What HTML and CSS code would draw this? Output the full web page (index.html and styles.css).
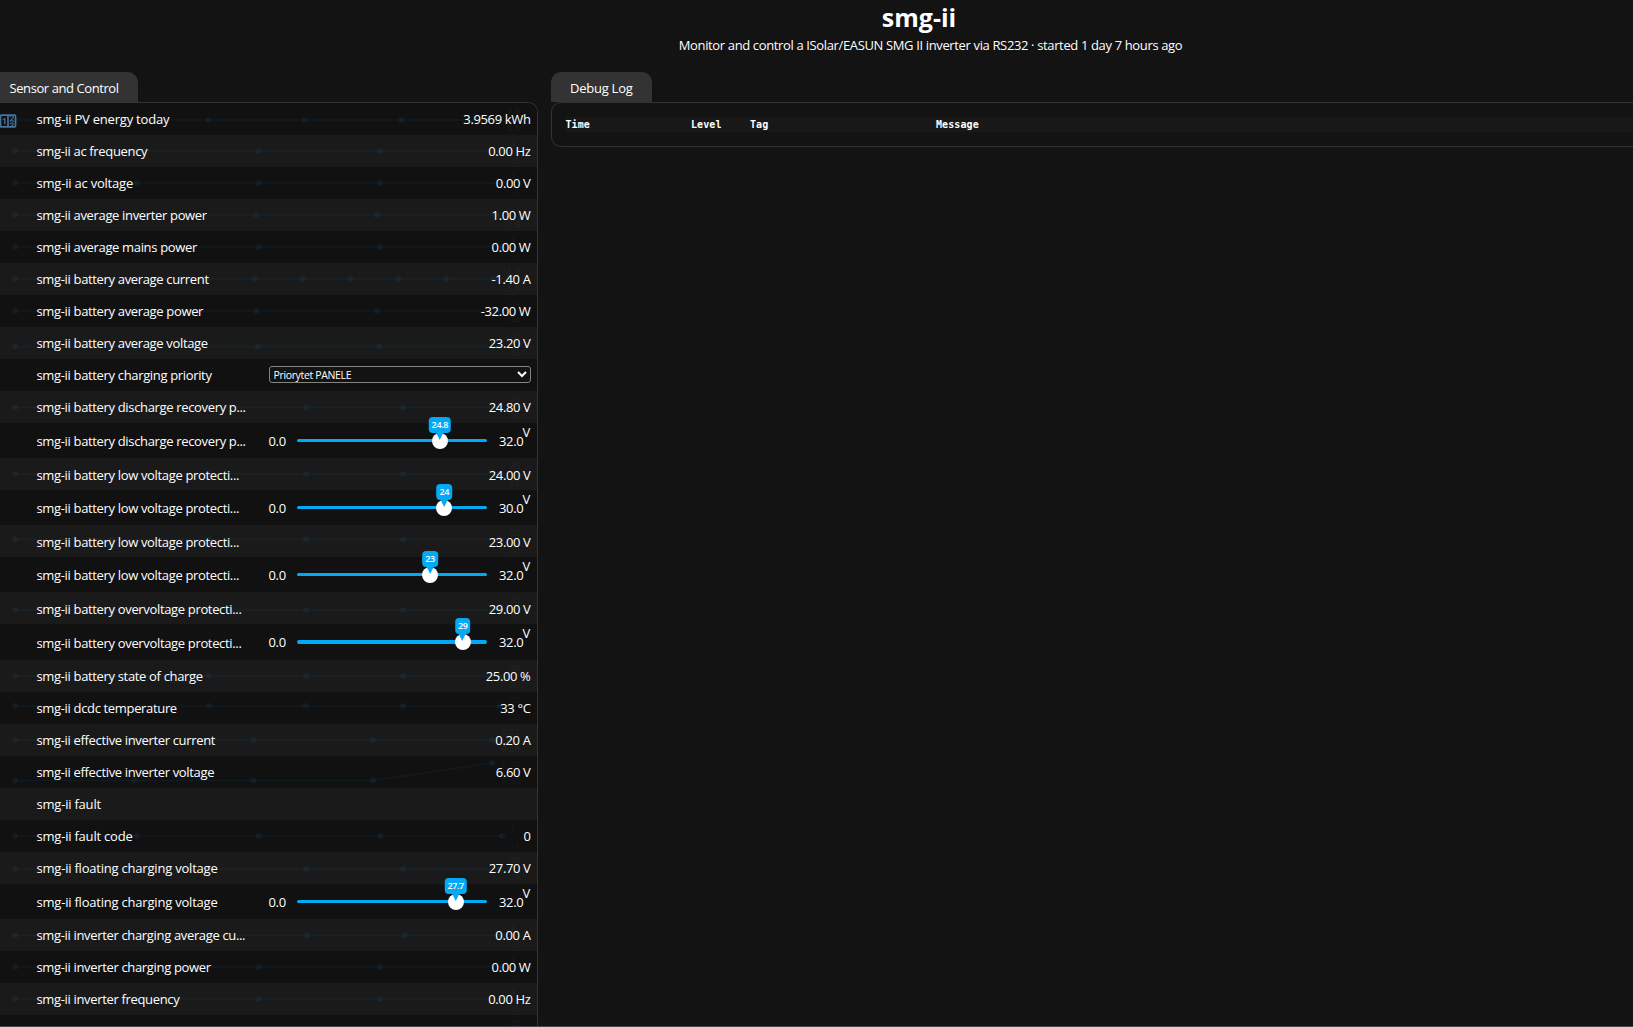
FILE: index.html
```
<!DOCTYPE html>
<html lang="en">
<head>
    <meta charset="UTF-8">
    <title>smg-ii</title>
    <link rel="stylesheet" href="styles.css">
</head>
<body>
    <header>
        <h1>smg-ii</h1>
        <p class="subtitle">Monitor and control a ISolar/EASUN SMG II inverter via RS232 · started 1 day 7 hours ago</p>
    </header>

    <main>
        <section class="entities">
            <h2 class="tab">Sensor and Control</h2>
            <div class="panel" id="entity-table"></div>
        </section>

        <section class="log">
            <h2 class="tab">Debug Log</h2>
            <div class="panel">
                <div class="log-head">
                    <span>Time</span>
                    <span>Level</span>
                    <span>Tag</span>
                    <span>Message</span>
                </div>
            </div>
        </section>
    </main>

    <script src="app.js"></script>
</body>
</html>
```
FILE: styles.css
```
* {
    box-sizing: border-box;
}
body {
    margin: 0;
    height: 1027px;
    overflow: hidden;
    background: #131313;
    color: #fff;
    border-bottom: 1px solid #4a4a4a;
    font-family: "Open Sans", "Noto Sans", sans-serif;
    font-size: 13px;
    letter-spacing: -0.36px;
}
header {
    height: 72px;
    padding-left: 205px;
    text-align: center;
}
h1 {
    margin: 0;
    font-size: 25px;
    line-height: 34px;
    letter-spacing: 0;
}
.subtitle {
    margin: 0;
    padding-left: 23px;
    line-height: 23px;
}
main {
    display: flex;
    gap: 13px;
}
.entities {
    flex: 0 0 538px;
}
.log {
    flex: 0 0 1120px;
}
.tab {
    width: 138px;
    height: 30px;
    margin: 0;
    padding-left: 9.5px;
    font-size: 13px;
    font-weight: normal;
    line-height: 33px;
    letter-spacing: -0.42px;
    background: #333;
    border-radius: 0 10px 0 0;
}
.log .tab {
    width: 101px;
    padding-left: 19px;
    letter-spacing: -0.25px;
    border-radius: 10px 10px 0 0;
}
.panel {
    border: 1px solid #333;
}
.entities .panel {
    height: 930px;
    overflow: hidden;
    border-left: 0;
    border-radius: 0 10px 0 0;
}
.log .panel {
    height: 45px;
    padding: 14px 14px 14px 13.5px;
    border-radius: 10px;
}
.log-head {
    display: grid;
    grid-template-columns: 125.5px 59px 186px 1fr;
    height: 15px;
    background: #181818;
    font: bold 10px/15px "DejaVu Sans Mono", monospace;
    letter-spacing: 0.1px;
}
.row {
    position: relative;
    display: grid;
    grid-template-columns: 232px 262px;
    align-items: center;
    height: 32px;
    padding-left: 36.5px;
    background: #111;
}
.row:nth-child(even) {
    background: #1a1a1a;
}
.row.number {
    height: 35px;
}
.row.number.tall {
    height: 36px;
}
.row.low {
    padding-top: 2px;
}
.name,
.value {
    position: relative;
    white-space: nowrap;
}
.name {
    letter-spacing: -0.34px;
}
.loose .name {
    letter-spacing: -0.21px;
}
.number:not(.tall) .name {
    padding-bottom: 2px;
}
.value {
    text-align: right;
}
.chart {
    position: absolute;
    left: 0;
    top: 0;
    width: 537px;
    height: 32px;
}
.chart path {
    fill: none;
    stroke: rgba(20, 110, 160, 0.12);
    stroke-width: 1.5;
}
.chart circle {
    fill: rgba(30, 110, 160, 0.13);
}
.chart text {
    fill: rgba(255, 255, 255, 0.055);
    font: 9.5px "Liberation Sans", sans-serif;
    letter-spacing: 0;
    text-anchor: end;
}
.icon {
    position: absolute;
    left: -2px;
    top: 7.5px;
    width: 20px;
    height: 20px;
    fill: #44739e;
}
select {
    width: 262px;
    height: 17px;
    margin-bottom: 2px;
    padding: 0;
    background: #131313;
    color: #fff;
    border: 1px solid #858585;
    border-radius: 3px;
    font: 10.5px "Open Sans", sans-serif;
    letter-spacing: -0.35px;
}
.control {
    display: grid;
    grid-template-columns: 28px 190px 12.5px 23.5px 8px;
    height: 100%;
    line-height: 37px;
}
.unit {
    line-height: 19px;
}
.track {
    position: relative;
    align-self: start;
    height: 3px;
    margin-top: 16px;
    border-radius: 2px;
    background: #03a9f4;
}
.tall .track {
    height: 4px;
}
.max {
    grid-column: 4;
}
.thumb {
    position: absolute;
    top: -6px;
    width: 16px;
    height: 16px;
    margin-left: -8px;
    border-radius: 50%;
    background: #fff;
}
.bubble {
    position: absolute;
    left: 50%;
    bottom: 16px;
    transform: translateX(-50%);
    padding: 0 3px;
    border-radius: 4px;
    background: #03a9f4;
    color: #fff;
    font-size: 9px;
    font-weight: 600;
    line-height: 16px;
}
.bubble::after {
    content: "";
    position: absolute;
    left: 50%;
    top: 15px;
    margin-left: -4px;
    border: 4px solid transparent;
    border-top: 8px solid #03a9f4;
    border-bottom: 0;
}
```
FILE: app.js
```
// chart: [step between points, y of the line, upper label, lower label]
const entities = [
    { name: 'PV energy today', value: '3.9569 kWh', chart: [96.6, 17, '4,5', '3,5'], icon: true, cls: 'loose' },
    { name: 'ac frequency', value: '0.00 Hz', chart: [121.8, 16, '1', '-1'] },
    { name: 'ac voltage', value: '0.00 V', chart: [121.8, 16, '1', '-1'], cls: 'loose' },
    { name: 'average inverter power', value: '1.00 W', chart: [120.6, 16, '1,1', '0,9'] },
    { name: 'average mains power', value: '0.00 W', chart: [121.8, 16, '1', '-1'] },
    { name: 'battery average current', value: '-1.40 A', chart: [47.9, 16, '-1,3', '-1,5'] },
    { name: 'battery average power', value: '-32.00 W', chart: [120.6, 16, '-30', '-34'] },
    { name: 'battery average voltage', value: '23.20 V', chart: [121.4, 19.5, '26', '22'] },
    { name: 'battery charging priority', select: 'Priorytet PANELE' },
    { name: 'battery discharge recovery p...', value: '24.80 V', chart: [97, 16.5, '30', '20'] },
    { name: 'battery discharge recovery p...', number: '24.8', max: '32.0' },
    { name: 'battery low voltage protecti...', value: '24.00 V', chart: [97, 16, '26', '22'], cls: 'low' },
    { name: 'battery low voltage protecti...', number: '24', max: '30.0' },
    { name: 'battery low voltage protecti...', value: '23.00 V', chart: [97, 14.5, '25', '20'], cls: 'low' },
    { name: 'battery low voltage protecti...', number: '23', max: '32.0' },
    { name: 'battery overvoltage protecti...', value: '29.00 V', chart: [97, 18, '35', '25'], cls: 'low' },
    { name: 'battery overvoltage protecti...', number: '29', max: '32.0', cls: 'tall' },
    { name: 'battery state of charge', value: '25.00 %', chart: [97, 16, '30', '20'] },
    { name: 'dcdc temperature', value: '33 °C', chart: [97, 14, '35', '30'] },
    { name: 'effective inverter current', value: '0.20 A', chart: [119.3, 16, '0,22', '0,18'] },
    { name: 'effective inverter voltage', value: '6.60 V', chart: [119.3, 24.5, '6,60', '6,50'], last: 7 },
    { name: 'fault', value: '', cls: 'loose' },
    { name: 'fault code', value: '0', chart: [121.8, 16, '1', '-1'], cls: 'loose' },
    { name: 'floating charging voltage', value: '27.70 V', chart: [97, 17, '30', '26'], cls: 'loose' },
    { name: 'floating charging voltage', number: '27.7', max: '32.0', cls: 'loose' },
    { name: 'inverter charging average cu...', value: '0.00 A', chart: [97.4, 16.5, '1', '-1'] },
    { name: 'inverter charging power', value: '0.00 W', chart: [121.8, 16, '1', '-1'] },
    { name: 'inverter frequency', value: '0.00 Hz', chart: [121.8, 16, '1', '-1'] },
    { name: '', value: '', chart: [121.8, 16, '38', ''] }
];

const counterIcon = '<svg class="icon" viewBox="0 0 24 24"><path d="M4,4H20A2,2 0 0,1 22,6V18A2,2 0 0,1 20,20H4A2,2 0 0,1 2,18V6A2,2 0 0,1 4,4M4,6V18H11V6H4M20,18V6H18.76C19,6.54 18.95,7.07 18.95,7.13C18.88,7.8 18.41,8.5 18.24,8.75L15.91,11.3L19.23,11.28L19.24,12.5L14.04,12.47L14,11.47C14,11.47 17.05,8.24 17.2,7.95C17.34,7.67 17.91,6 16.5,6C15.27,6.05 15.41,7.3 15.41,7.3L13.87,7.31C13.87,7.31 13.88,6.65 14.25,6H13V18H15.58L15.57,17.14L16.54,17.13C16.54,17.13 17.45,16.97 17.46,16.08C17.5,15.08 16.65,15.08 16.5,15.08C16.37,15.08 15.43,15.13 15.43,15.95H13.91C13.91,15.95 13.95,13.89 16.5,13.89C19.1,13.89 18.96,15.91 18.96,15.91C18.96,15.91 19,17.16 17.85,17.63L18.37,18H20M8.92,16H7.42V10.2L5.62,10.76V9.53L8.76,8.41H8.92V16Z"/></svg>';

function chart(entity) {
    const [step, y, upper, lower] = entity.chart;
    const points = [];
    for (let x = 15; x < 504; x += step) {
        points.push([x, y]);
    }
    if (entity.last) {
        points[points.length - 1][1] = entity.last;
    }
    const labelX = upper === '1' ? 516 : 520;
    return `<svg class="chart">
        <path d="M${points.join('L')}"/>
        ${points.map(p => `<circle cx="${p[0]}" cy="${p[1]}" r="3"/>`).join('')}
        <text x="${labelX}" y="11">${upper}</text>
        <text x="520" y="28">${lower}</text>
    </svg>`;
}

function control(entity) {
    if (entity.select) {
        return `<select><option>${entity.select}</option></select>`;
    }
    if (entity.number) {
        // keep the 16px thumb inside the track
        const left = 8.5 + 174 * entity.number / entity.max;
        return `<div class="control">
            <span class="min">0.0</span>
            <div class="track">
                <div class="thumb" style="left: ${left}px"><span class="bubble">${entity.number}</span></div>
            </div>
            <span class="max">${entity.max}</span>
            <span class="unit">V</span>
        </div>`;
    }
    return `<div class="value">${entity.value}</div>`;
}

document.getElementById('entity-table').innerHTML = entities.map(entity => `
    <div class="row${entity.number ? ' number' : ''}${entity.cls ? ' ' + entity.cls : ''}">
        ${entity.chart ? chart(entity) : ''}
        ${entity.icon ? counterIcon : ''}
        <div class="name">${entity.name ? 'smg-ii ' + entity.name : ''}</div>
        ${control(entity)}
    </div>`).join('');
```
